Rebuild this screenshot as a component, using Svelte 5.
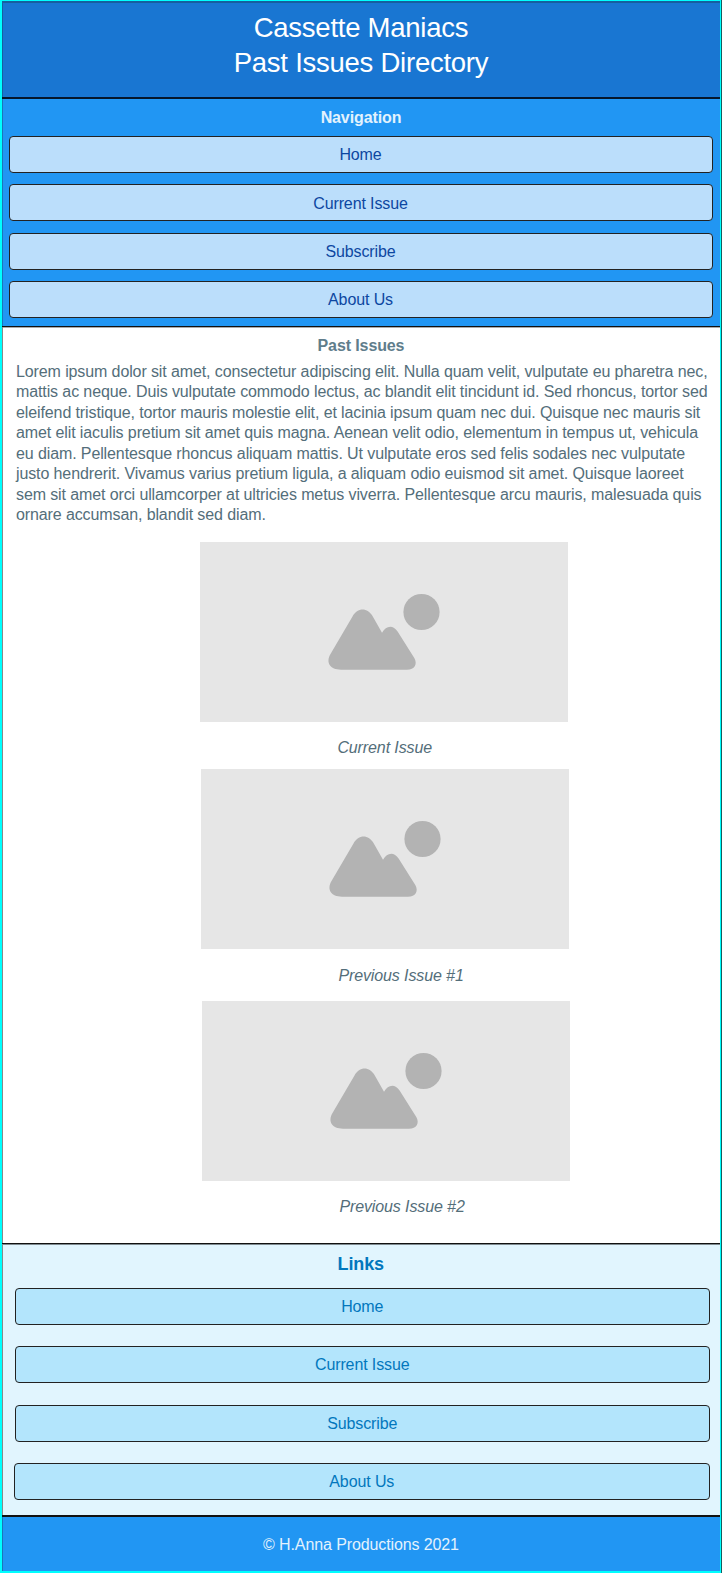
<script>
  const links = ['Home', 'Current Issue', 'Subscribe', 'About Us'];
  const issues = ['Current Issue', 'Previous Issue #1', 'Previous Issue #2'];
  const lines = [
    'Lorem ipsum dolor sit amet, consectetur adipiscing elit. Nulla quam velit, vulputate eu pharetra nec,',
    'mattis ac neque. Duis vulputate commodo lectus, ac blandit elit tincidunt id. Sed rhoncus, tortor sed',
    'eleifend tristique, tortor mauris molestie elit, et lacinia ipsum quam nec dui. Quisque nec mauris sit',
    'amet elit iaculis pretium sit amet quis magna. Aenean velit odio, elementum in tempus ut, vehicula',
    'eu diam. Pellentesque rhoncus aliquam mattis. Ut vulputate eros sed felis sodales nec vulputate',
    'justo hendrerit. Vivamus varius pretium ligula, a aliquam odio euismod sit amet. Quisque laoreet',
    'sem sit amet orci ullamcorper at ultricies metus viverra. Pellentesque arcu mauris, malesuada quis',
    'ornare accumsan, blandit sed diam.'
  ];
</script>

<div class="page">
  <header>
    <h1>Cassette Maniacs<br />Past Issues Directory</h1>
  </header>

  <nav>
    <h2>Navigation</h2>
    {#each links as link}
      <a href="#top">{link}</a>
    {/each}
  </nav>

  <main>
    <h2>Past Issues</h2>
    <p>{#each lines as line}<span>{line}</span>{/each}</p>
    {#each issues as issue}
      <figure>
        <svg viewBox="0 0 368 180" width="368" height="180">
          <rect width="368" height="180" fill="#e6e6e6" />
          <circle cx="221.5" cy="70" r="18.1" fill="#b3b3b3" />
          <path
            d="M152.500 74.500C157.500 65.300 167.500 65.300 172.800 74.500L182 90.700C186 83.500 193 82.500 197.600 89.500L214.300 116C217.800 122.500 214.500 127.700 207 127.700H141C130 127.700 125.500 120.500 130.500 112Z"
            fill="#b3b3b3"
          />
        </svg>
        <figcaption>{issue}</figcaption>
      </figure>
    {/each}
  </main>

  <section>
    <h3>Links</h3>
    {#each links as link}
      <a href="#top">{link}</a>
    {/each}
  </section>

  <footer>© H.Anna Productions 2021</footer>
</div>

<style>
  :global(body) {
    background: #fff;
  }
  .page {
    box-sizing: border-box;
    width: 721px;
    height: 1573px;
    display: flex;
    flex-direction: column;
    border: solid #00ffff;
    border-width: 1px 1px 2px 2px;
    box-shadow: 1px 0 #145f5f;
    font-family: 'Liberation Sans', Arial, sans-serif;
    font-size: 16px;
    letter-spacing: -0.11px;
  }
  .page * {
    box-sizing: border-box;
  }
  h1, h2, h3, p, figure {
    margin: 0;
  }
  header, nav, main, section {
    flex-shrink: 0;
  }
  header {
    height: 98px;
    background: #1976d2;
    border-bottom: 2px solid #06162a;
    box-shadow: inset 0 2px #165f9f, inset 1px 0 #165f9f;
    color: #fff;
    text-align: center;
    padding-top: 9px;
  }
  h1 {
    font-size: 27.5px;
    font-weight: 400;
    line-height: 35px;
    letter-spacing: -0.25px;
  }
  nav {
    height: 228px;
    display: flex;
    flex-direction: column;
    gap: 11.300px;
    padding: 0 7px 0 7px;
    background: #2196f3;
    border-bottom: 1px solid #111;
    box-shadow: inset 1px 0 #1b75b8;
  }
  nav h2 {
    height: 25.700px;
    line-height: 37px;
    color: #e3f2fd;
  }
  h2 {
    font-size: 16px;
    text-align: center;
  }
  a {
    display: block;
    flex: none;
    height: 37px;
    line-height: 36px;
    border: 1px solid #222;
    border-radius: 4px;
    text-align: center;
    text-decoration: none;
  }
  nav a {
    background: #bbdefb;
    color: #0d47a1;
    text-indent: -1px;
  }
  nav a:nth-of-type(2) {
    line-height: 37px;
  }
  main {
    height: 916px;
    color: #546e7a;
    box-shadow: inset 1px 0 #888, inset 0 1px #aaa;
  }
  main h2 {
    line-height: 38px;
    height: 34px;
    color: #607d8b;
  }
  p {
    height: 181px;
    padding: 0.700px 0 0 14px;
    line-height: 20.500px;
  }
  p span {
    display: block;
    white-space: nowrap;
  }
  figure {
    height: 227px;
    margin-left: 198px;
  }
  figure:nth-of-type(2) {
    height: 232px;
    margin-left: 199px;
  }
  figure:nth-of-type(3) {
    margin-left: 200px;
  }
  svg {
    display: block;
  }
  figcaption {
    padding-left: 137.400px;
    line-height: 52px;
    font-style: italic;
  }
  figure:nth-of-type(2) figcaption {
    line-height: 54px;
  }
  section {
    height: 272px;
    display: flex;
    flex-direction: column;
    gap: 21.500px;
    padding: 0 10px 0 12.500px;
    background: #e1f5fe;
    border-top: 1px solid #111;
    box-shadow: inset 1px 0 #888, inset 0 1px #7f8a8f;
  }
  h3 {
    height: 22.400px;
    line-height: 40px;
    font-size: 18px;
    text-align: center;
    text-indent: -3px;
    color: #0277bd;
  }
  section a {
    background: #b3e5fc;
    color: #0277bd;
  }
  section a:last-child {
    margin-left: -1px;
  }
  footer {
    flex: 1;
    min-height: 0;
    overflow: hidden;
    background: #2196f3;
    border-top: 2px solid #111;
    box-shadow: inset 1px 0 #1b75b8;
    color: #e3f2fd;
    text-align: center;
    line-height: 55px;
  }
</style>
